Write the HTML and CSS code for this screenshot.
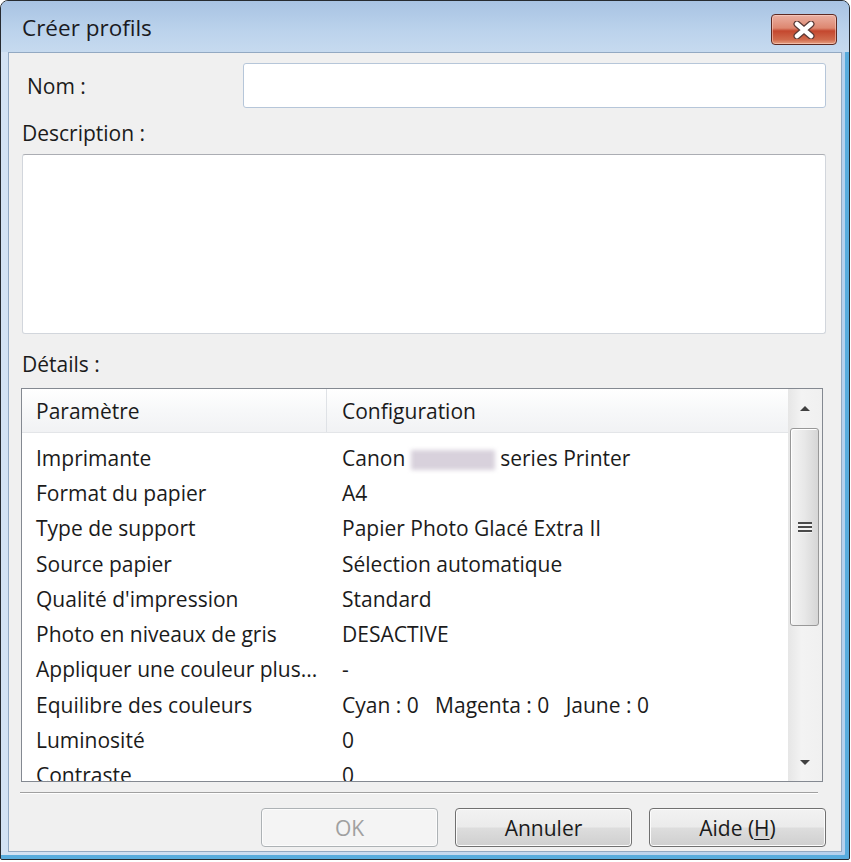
FILE: index.html
```html
<!DOCTYPE html>
<html lang="fr">
<head>
  <meta charset="UTF-8">
  <meta name="viewport" content="width=device-width, initial-scale=1.0">
  <title>Créer profils</title>
  <link rel="stylesheet" href="styles.css">
</head>
<body>
  <div class="window">
    <div class="titlebar">
      <span class="title">Créer profils</span>
      <button class="close-btn" aria-label="Fermer">
        <svg width="26" height="18" viewBox="0 0 26 18">
          <path d="M6 3 L20 15 M20 3 L6 15" stroke="#5a3a36" stroke-width="7" stroke-linecap="round"/>
          <path d="M6 3 L20 15 M20 3 L6 15" stroke="#ffffff" stroke-width="4.5" stroke-linecap="round"/>
        </svg>
      </button>
    </div>

    <div class="client">
      <div class="name-row">
        <label class="field-label">Nom :</label>
        <div class="text-input"></div>
      </div>

      <div class="section-label">Description :</div>
      <div class="text-area"></div>

      <div class="section-label details-label">Détails :</div>
      <div class="list-view">
        <div class="list-main">
          <div class="list-header">
            <div class="col-param">Paramètre</div>
            <div class="col-config">Configuration</div>
          </div>
          <div class="list-body">
            <div class="list-row"><div class="col-param">Imprimante</div><div class="col-config">Canon <span class="blurred"></span> series Printer</div></div>
            <div class="list-row"><div class="col-param">Format du papier</div><div class="col-config">A4</div></div>
            <div class="list-row"><div class="col-param">Type de support</div><div class="col-config">Papier Photo Glacé Extra II</div></div>
            <div class="list-row"><div class="col-param">Source papier</div><div class="col-config">Sélection automatique</div></div>
            <div class="list-row"><div class="col-param">Qualité d'impression</div><div class="col-config">Standard</div></div>
            <div class="list-row"><div class="col-param">Photo en niveaux de gris</div><div class="col-config">DESACTIVE</div></div>
            <div class="list-row"><div class="col-param">Appliquer une couleur plus...</div><div class="col-config">-</div></div>
            <div class="list-row"><div class="col-param">Equilibre des couleurs</div><div class="col-config">Cyan : 0   Magenta : 0   Jaune : 0</div></div>
            <div class="list-row"><div class="col-param">Luminosité</div><div class="col-config">0</div></div>
            <div class="list-row"><div class="col-param">Contraste</div><div class="col-config">0</div></div>
          </div>
        </div>
        <div class="scrollbar">
          <div class="scroll-arrow"><span class="arrow-up"></span></div>
          <div class="scroll-track">
            <div class="scroll-thumb">
              <span class="grip"></span>
            </div>
          </div>
          <div class="scroll-arrow"><span class="arrow-down"></span></div>
        </div>
      </div>

      <div class="separator"></div>

      <div class="button-row">
        <button class="btn" disabled>OK</button>
        <button class="btn">Annuler</button>
        <button class="btn">Aide (<u>H</u>)</button>
      </div>
    </div>
  </div>
</body>
</html>
```

FILE: styles.css
```css
* {
  box-sizing: border-box;
}

body {
  margin: 0;
  background-color: #ffffff;
  font-family: "Open Sans", "Noto Sans", sans-serif;
  font-size: 21px;
  color: #1b1b1b;
}

.window {
  width: 850px;
  height: 860px;
  border: 1px solid #262a30;
  border-radius: 8px 8px 2px 2px;
  background: linear-gradient(90deg, #d3e2f3 0%, #c4d8ee 60%, #b5d0ec 100%);
  box-shadow: inset -4px -4px 0 #58acdd;
  display: flex;
  flex-direction: column;
  overflow: hidden;
}

.titlebar {
  height: 51px;
  flex-shrink: 0;
  display: flex;
  align-items: flex-start;
  justify-content: space-between;
  padding: 12px 12px 0 21px;
  background: linear-gradient(#a8c3e3, #bcd3ec 60%, #c6daef);
}

.title {
  line-height: 30px;
  font-size: 22.5px;
  color: #1a1a22;
}

.close-btn {
  width: 66px;
  height: 31px;
  margin-top: 1px;
  padding: 0;
  border: 1px solid #5e2a22;
  border-radius: 4px;
  background: linear-gradient(#eab0a2 0%, #dd8770 45%, #c4472e 55%, #d06a4c 85%, #e6a184 100%);
  box-shadow: inset 0 0 0 1px rgba(255, 220, 210, 0.5);
  display: flex;
  align-items: center;
  justify-content: center;
}

.client {
  flex: 1;
  margin: 0 7px 7px 7px;
  border: 1px solid #93a9c2;
  background-color: #f0f0f0;
  padding: 10px 15px 0 12px;
  display: flex;
  flex-direction: column;
}

.name-row {
  display: flex;
  align-items: center;
  height: 45px;
}

.field-label {
  padding-left: 6px;
}

.text-input {
  margin-left: auto;
  width: 583px;
  height: 45px;
  background-color: #ffffff;
  border: 1px solid #b6c6d9;
  border-radius: 3px;
}

.section-label {
  line-height: 26px;
  margin-top: 12px;
  padding-left: 1px;
}

.text-area {
  margin-top: 8px;
  margin-left: 1px;
  width: 804px;
  height: 180px;
  background-color: #ffffff;
  border: 1px solid #d2d6dc;
  border-top-color: #abadb3;
  border-radius: 3px;
}

.details-label {
  margin-top: 17px;
}

.list-view {
  margin-top: 11px;
  width: 802px;
  height: 394px;
  border: 1px solid #848991;
  background-color: #ffffff;
  display: flex;
  overflow: hidden;
}

.list-main {
  flex: 1;
  overflow: hidden;
}

.list-header {
  display: flex;
  height: 44px;
  align-items: center;
  background: linear-gradient(#ffffff, #f7f8f9 50%, #f1f2f4);
  border-bottom: 1px solid #e3e5e8;
}

.list-header .col-param {
  height: 100%;
  display: flex;
  align-items: center;
  border-right: 1px solid #dfe2e6;
}

.col-param {
  width: 305px;
  padding-left: 14px;
  white-space: nowrap;
  overflow: hidden;
}

.col-config {
  padding-left: 15px;
  white-space: pre;
}

.list-body {
  padding-top: 7px;
}

.list-row {
  display: flex;
  align-items: center;
  height: 35.3px;
}

.list-row .col-param {
  padding-right: 14px;
}

.list-row .col-config {
  padding-left: 15px;
}

.blurred {
  display: inline-block;
  width: 84px;
  height: 20px;
  vertical-align: middle;
  background-color: #d8d1dc;
  filter: blur(2px);
}

.scrollbar {
  width: 34px;
  display: flex;
  flex-direction: column;
  background: linear-gradient(90deg, #e6e6e6, #f3f3f3 40%, #f0f0f0);
}

.scroll-arrow {
  height: 38px;
  display: flex;
  align-items: center;
  justify-content: center;
}

.arrow-up {
  width: 0;
  height: 0;
  border-left: 5px solid transparent;
  border-right: 5px solid transparent;
  border-bottom: 5px solid #404040;
}

.arrow-down {
  width: 0;
  height: 0;
  border-left: 5px solid transparent;
  border-right: 5px solid transparent;
  border-top: 5px solid #404040;
}

.scroll-track {
  flex: 1;
  padding: 1px 3px 0 2px;
}

.scroll-thumb {
  height: 198px;
  border: 1px solid #989898;
  border-radius: 3px;
  background: linear-gradient(90deg, #f4f4f4, #e8e8e8 50%, #d6d6d6);
  box-shadow: inset 1px 1px 0 #ffffff;
  display: flex;
  align-items: center;
  justify-content: center;
}

.grip {
  width: 14px;
  height: 11px;
  background: linear-gradient(#4a4a4a 0, #4a4a4a 2px, #f4f4f4 2px, #f4f4f4 4px, #4a4a4a 4px, #4a4a4a 6px, #f4f4f4 6px, #f4f4f4 8px, #4a4a4a 8px, #4a4a4a 10px, #f4f4f4 10px);
}

.separator {
  margin-top: 10px;
  margin-left: -1px;
  width: 798px;
  height: 2px;
  border-top: 1px solid #a0a0a0;
  border-bottom: 1px solid #ffffff;
}

.button-row {
  margin-top: 14px;
  display: flex;
  justify-content: flex-end;
  gap: 17px;
}

.btn {
  width: 177px;
  height: 39px;
  font-family: inherit;
  font-size: 21px;
  color: #1b1b1b;
  border: 1px solid #707070;
  border-radius: 4px;
  background: linear-gradient(#f2f2f2 0%, #ebebeb 48%, #dddddd 52%, #cfcfcf 100%);
  box-shadow: inset 0 0 0 1px #fcfcfc;
  padding: 0;
}

.btn:disabled {
  color: #a0a0a0;
  border-color: #adb2b5;
  background: #f4f4f4;
}

.btn u {
  text-decoration-thickness: 1px;
  text-underline-offset: 3px;
}
```
